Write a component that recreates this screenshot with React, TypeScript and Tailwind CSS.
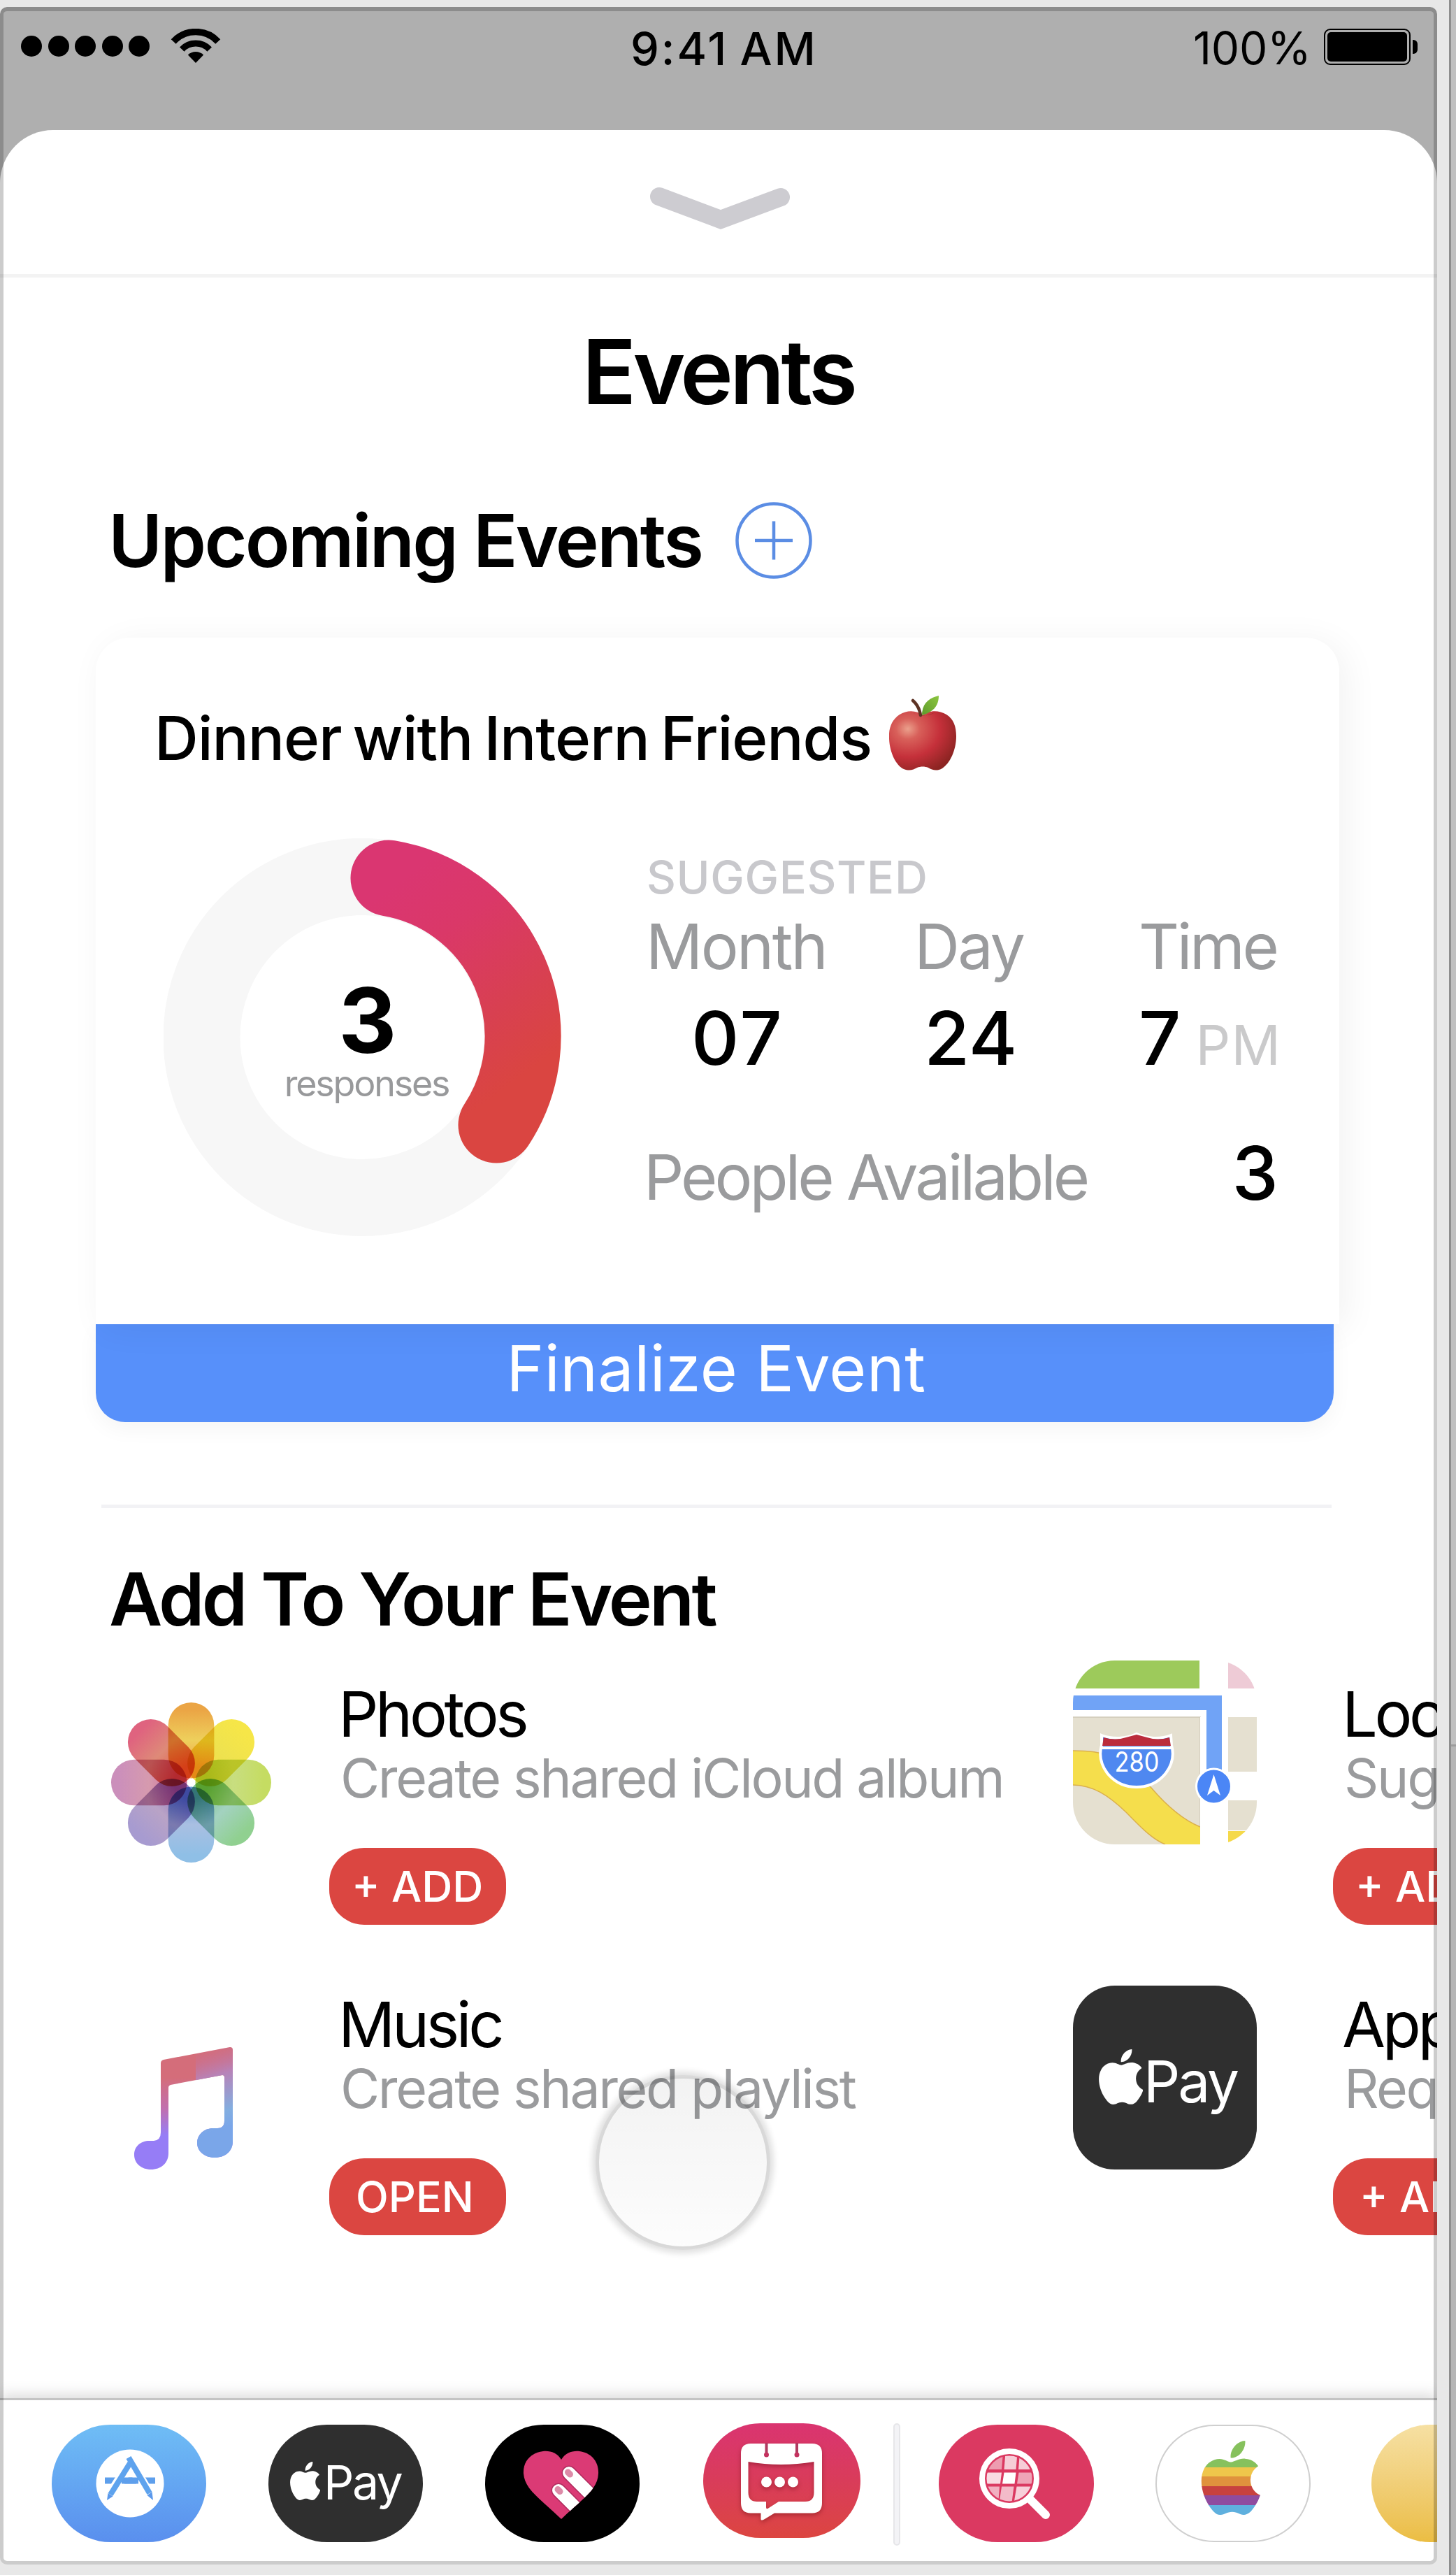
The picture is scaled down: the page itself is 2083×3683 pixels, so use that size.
import React from "react";

const APPLE =
  "M12.152 6.896c-.948 0-2.415-1.078-3.96-1.04-2.04.027-3.91 1.183-4.961 3.014-2.117 3.675-.546 9.103 1.519 12.09 1.013 1.454 2.208 3.09 3.792 3.039 1.52-.065 2.09-.987 3.935-.987 1.831 0 2.35.987 3.96.948 1.637-.026 2.676-1.48 3.676-2.948 1.156-1.688 1.636-3.325 1.662-3.415-.039-.013-3.182-1.221-3.22-4.857-.026-3.04 2.48-4.494 2.597-4.559-1.429-2.09-3.623-2.324-4.39-2.376-2-.156-3.675 1.09-4.61 1.09zM15.53 3.83c.843-1.012 1.4-2.427 1.245-3.83-1.207.052-2.662.805-3.532 1.818-.78.896-1.454 2.338-1.273 3.714 1.338.104 2.715-.688 3.559-1.701";

function AppleLogo({ className }: { className: string }) {
  return (
    <svg className={className} viewBox="2.2 0 19.4 24" preserveAspectRatio="none" fill="currentColor">
      <path d={APPLE} />
    </svg>
  );
}

function StatusBar() {
  return (
    <div className="flex h-[176px] shrink-0 items-start pl-[30px]">
      <div className="mt-[41px] flex gap-[8.5px]">
        {[0, 1, 2, 3, 4].map((i) => (
          <div key={i} className="size-[30px] rounded-full bg-black" />
        ))}
      </div>
      <svg className="mt-[31px] ml-[30px] h-[50px] w-[72px]" viewBox="0 0 72 50" fill="none" stroke="#000">
        <path d="M4.2 18.4A43.5 43.5 0 0 1 67.8 18.4" strokeWidth="9.5" />
        <path d="M16.3 29.6A27 27 0 0 1 55.7 29.6" strokeWidth="9" />
        <path d="M36 49L24.8 37.6A16 16 0 0 1 47.2 37.6Z" fill="#000" stroke="none" />
      </svg>
      <div className="mt-[27px] ml-[586px] w-[269px] text-[65px] leading-none font-[550] tracking-[2.9px] [word-spacing:-4px] whitespace-nowrap">
        9:41 AM
      </div>
      <div className="mt-[27px] ml-[536px] w-[169px] text-[64px] leading-none tracking-[-0.26px]">100%</div>
      <div className="mt-[31px] ml-[18px] h-[52px] w-[124px] rounded-[9px] border-2 border-black p-[3px]">
        <div className="h-full rounded-[5px] bg-black" />
      </div>
      <div className="mt-[47px] ml-[3px] h-[20px] w-[7px] rounded-r-[6px] bg-black" />
    </div>
  );
}

function RedApple() {
  return (
    <svg className="ml-[25px] h-[107px] w-[96px]" viewBox="0 0 96 107">
      <defs>
        <radialGradient id="skin" cx="0.28" cy="0.3" r="0.8">
          <stop offset="0" stopColor="#eba08c" />
          <stop offset="0.22" stopColor="#d8605a" />
          <stop offset="0.6" stopColor="#c5303a" />
          <stop offset="1" stopColor="#8c2422" />
        </radialGradient>
        <linearGradient id="leaf" x1="0" y1="1" x2="1" y2="0">
          <stop offset="0" stopColor="#5d9a2c" />
          <stop offset="1" stopColor="#8cc63f" />
        </linearGradient>
      </defs>
      <path
        d="M48 28C40 21 26 20 15 27C3 35-1 48 0 62C1 82 10 100 21 105C29 108 35 106 40 103C45 101 51 101 56 103C62 107 69 108 76 104C87 97 96 78 96 58C96 44 92 33 82 27C71 20 56 21 48 28Z"
        fill="url(#skin)"
      />
      <path d="M33 24Q48 33 66 24Q52 29 48 29Q42 29 33 24Z" fill="#7d2a1c" opacity="0.7" />
      <path d="M45 28Q43 15 34 7" fill="none" stroke="#5d3324" strokeWidth="4.5" strokeLinecap="round" />
      <path d="M47 28C47 10 58 3 71 0C71 13 65 23 47 28Z" fill="url(#leaf)" />
    </svg>
  );
}

function ResponseRing() {
  return (
    <div className="relative ml-[14px] size-[570px] shrink-0">
      <svg className="size-full" viewBox="0 0 570 570" fill="none">
        <defs>
          <linearGradient id="ring" x1="0.1" y1="0" x2="0.5" y2="1">
            <stop offset="0" stopColor="#da3671" />
            <stop offset="0.3" stopColor="#da3868" />
            <stop offset="0.7" stopColor="#d84051" />
            <stop offset="1" stopColor="#da4541" />
          </linearGradient>
        </defs>
        <circle cx="284" cy="284.500" r="229.500" stroke="#f7f7f7" strokeWidth="110" />
        <path d="M322 57A229.500 229.500 0 0 1 476 410" stroke="url(#ring)" strokeWidth="109" strokeLinecap="round" />
      </svg>
      <div className="absolute inset-0 flex flex-col items-center pt-[196px] pl-[14px]">
        <div className="text-[129px] leading-none font-bold">3</div>
        <div className="mr-[3px] text-[52px] leading-none tracking-[-2.2px] text-[#98999b]">responses</div>
      </div>
    </div>
  );
}

function EventCard() {
  return (
    <div className="mt-[84px] ml-[137px]">
      <div className="relative z-10 h-[982px] w-[1779px] rounded-t-[48px] bg-white pt-[83px] pl-[83px] shadow-[10px_6px_50px_rgba(0,0,0,0.055)]">
        <div className="flex items-start">
          <div className="mt-[17px] w-[1027px] pl-[1px] text-[87px] leading-none font-medium tracking-[-1.1px] [word-spacing:-6px] whitespace-nowrap">
            Dinner with Intern Friends
          </div>
          <RedApple />
        </div>
        <div className="mt-[97px] flex items-start">
          <ResponseRing />
          <div className="mt-[23px] ml-[117px] w-[908px] leading-none text-[#9a9b9d]">
            <div className="pl-[4px] text-[65px] font-medium tracking-[0.6px] text-[#c8c8cc]">SUGGESTED</div>
            <div className="mt-[22px] grid grid-cols-[387px_321px_198px] text-[90px] font-normal">
              <div className="pl-[3px] tracking-[-2.6px]">Month</div>
              <div className="tracking-[-2.8px]">Day</div>
              <div className="tracking-[-3.4px]">Time</div>
            </div>
            <div className="mt-[33px] grid grid-cols-[387px_321px_198px] text-[106px] font-medium text-black">
              <div className="pl-[68px] tracking-[3px]">07</div>
              <div className="pl-[14px]">24</div>
              <div className="flex items-baseline">
                7<span className="ml-[21px] text-[78px] font-normal tracking-[1px] text-[#cacacb]">PM</span>
              </div>
            </div>
            <div className="mt-[87px] flex items-baseline justify-between">
              <div className="text-[90px] font-normal tracking-[-4px]">People Available</div>
              <div className="text-[106px] font-medium text-black">3</div>
            </div>
          </div>
        </div>
      </div>
      <div className="flex h-[140px] w-[1771px] justify-center rounded-b-[42px] bg-[#5790fa] pt-[18px] pl-[4px] text-[91px] leading-none tracking-[0.5px] text-white shadow-[0_10px_30px_rgba(0,0,0,0.045)]">
        Finalize Event
      </div>
    </div>
  );
}

const PETALS: [number, string, string, string][] = [
  [0, "#eba545", "#eed05c", "#f3a04a"],
  [45, "#f6e648", "#eee24f", "#f0dc48"],
  [90, "#c5dc62", "#c8de80", "#b4d658"],
  [135, "#90d090", "#a3d2c0", "#7cc08c"],
  [180, "#8fbfe6", "#a9bfe2", "#6a9cd6"],
  [225, "#a79bd0", "#b9a3c6", "#9478c0"],
  [270, "#cb8fbb", "#d69aae", "#cc6a98"],
  [315, "#df637f", "#de8a78", "#e06450"],
];

function PhotosIcon() {
  return (
    <svg className="mt-[60px] ml-[16px] size-[229px] isolate" viewBox="0 0 230 230">
      <defs>
        {PETALS.map(([a, c, d, e]) => (
          <linearGradient key={a} id={`petal${a}`} x1="0" y1="0" x2="0" y2="1">
            <stop offset="0.1" stopColor={c} />
            <stop offset="0.5" stopColor={d} />
            <stop offset="0.85" stopColor={e} />
          </linearGradient>
        ))}
      </defs>
      {PETALS.map(([a]) => (
        <rect
          key={a}
          className="mix-blend-multiply"
          x="82"
          y="0"
          width="66"
          height="109"
          rx="33"
          fill={`url(#petal${a})`}
          transform={`rotate(${a} 115 115)`}
        />
      ))}
    </svg>
  );
}

const NOTE =
  "M38 23Q38 19 42 18L137 0Q141 0 141 4V135C141 149 130 158 115 158C101 158 90 149 90 137C90 125 100 116 113 116H119Q129 116 129 105V43Q129 40 126 40L52 54Q49 55 49 58V152C49 166 38 175 24 175C10 175 0 166 0 154C0 142 9 134 22 134H28Q38 133 38 122Z";

function MusicIcon() {
  return (
    <svg className="mt-[88px] ml-[49px] h-[175px] w-[141px]" viewBox="0 0 141 175">
      <defs>
        <linearGradient id="noteA" x1="0" y1="0" x2="0" y2="1">
          <stop offset="0.25" stopColor="#d46d7a" />
          <stop offset="0.5" stopColor="#c16fae" />
          <stop offset="0.72" stopColor="#967df6" />
        </linearGradient>
        <linearGradient id="noteB" gradientUnits="userSpaceOnUse" x1="95" y1="5" x2="130" y2="115">
          <stop offset="0" stopColor="#c4709a" stopOpacity="0" />
          <stop offset="0.35" stopColor="#b783b8" />
          <stop offset="0.8" stopColor="#83aee0" />
          <stop offset="1" stopColor="#7aa6e9" />
        </linearGradient>
        <clipPath id="noteR">
          <rect x="88" y="0" width="60" height="175" />
        </clipPath>
      </defs>
      <path d={NOTE} fill="url(#noteA)" />
      <path d={NOTE} fill="url(#noteB)" clipPath="url(#noteR)" />
    </svg>
  );
}

function MapsIcon() {
  return (
    <svg className="size-[263px]" viewBox="0 0 263 263">
      <defs>
        <clipPath id="mapClip">
          <rect width="263" height="263" rx="60" />
        </clipPath>
      </defs>
      <g clipPath="url(#mapClip)">
        <rect width="263" height="263" fill="#fff" />
        <rect width="181" height="40" fill="#9dca5b" />
        <rect x="222" width="41" height="40" fill="#eecbd6" />
        <rect y="81" width="182" height="182" fill="#e5e0d0" />
        <path d="M182 263V81H0" fill="none" stroke="#cfc9b8" strokeWidth="1.5" />
        <rect x="222" y="81" width="41" height="78" fill="#e5e0d0" />
        <rect x="222" y="200" width="41" height="43" fill="#e5e0d0" />
        <rect x="222" y="244" width="41" height="19" fill="#f5d94a" />
        <path
          d="M-2 129C25 129 38 131 55 137C80 147 95 166 112 182C130 203 155 227 182 238V263H132C112 255 95 236 76 217C50 192 28 178 -2 178Z"
          fill="#f5de4c"
        />
        <path
          d="M-2 129C25 129 38 131 55 137C80 147 95 166 112 182C130 203 155 227 182 238M132 263C112 255 95 236 76 217C50 192 28 178 -2 178"
          fill="none"
          stroke="#dbb04c"
          strokeWidth="1.5"
        />
        <path d="M0 50H213V165H191V71H0Z" fill="#70a3f6" />
        <rect x="182" y="81" width="9" height="182" fill="#fff" />
        <path
          d="M41 107C57 113 76 112 91 105C106 112 125 113 140 107L141 121Q147 142 133 161Q117 181 91 181Q65 181 49 161Q35 142 41 121Z"
          fill="#4f88f0"
          stroke="#fff"
          strokeWidth="4"
        />
        <path d="M44 110Q60 115 76 110L91 106L106 110Q122 115 138 110L140 122H42Z" fill="#bb2c3c" />
        <path d="M40 125H142" stroke="#fff" strokeWidth="4" />
        <text x="91.5" y="158.5" textAnchor="middle" fontSize="40" fill="#fff" fontFamily="Inter, sans-serif" textLength="64" lengthAdjust="spacingAndGlyphs">
          280
        </text>
        <circle cx="201.5" cy="180" r="25" fill="#4b86f6" stroke="#fff" strokeWidth="3" />
        <path d="M201.5 163L211 193L201.500 186L192 193Z" fill="#fff" />
      </g>
    </svg>
  );
}

function ApplePayIcon() {
  return (
    <div className="flex size-[263px] items-start rounded-[60px] bg-[#2f2f2f] pl-[37px] text-white">
      <AppleLogo className="mt-[91px] h-[79px] w-[63px] shrink-0" />
      <div className="mt-[97px] ml-[1px] text-[82px] leading-none tracking-[-3.1px]">Pay</div>
    </div>
  );
}

type ItemProps = {
  icon: React.ReactNode;
  slot: string;
  pad: string;
  title: string;
  sub: string;
  action: string;
  actionPad: string;
};

function AddItem({ icon, slot, pad, title, sub, action, actionPad }: ItemProps) {
  return (
    <div className="flex h-[465px] items-start">
      <div className={`${slot} shrink-0`}>{icon}</div>
      <div className={`${pad} leading-none whitespace-nowrap`}>
        <div className="pl-[13px] text-[90px] tracking-[-4.4px]">{title}</div>
        <div className="mt-[8px] pl-[16px] text-[77px] tracking-[-2.4px] text-[#9a9b9d]">{sub}</div>
        <div
          className={`${actionPad} mt-[61px] flex h-[110px] w-[253px] items-center rounded-[50px] bg-[#db4641] text-[61px] font-medium text-white`}
        >
          {action}
        </div>
      </div>
    </div>
  );
}

function AddSection() {
  return (
    <div className="mt-[36px] ml-[143px] flex w-[2600px]">
      <div className="w-[1392px] shrink-0">
        <AddItem icon={<PhotosIcon />} slot="w-[328px]" pad="pt-[32px]" title="Photos" sub="Create shared iCloud album" action="+ ADD" actionPad="pl-[32px]" />
        <AddItem icon={<MusicIcon />} slot="w-[328px]" pad="pt-[11px]" title="Music" sub="Create shared playlist" action="OPEN" actionPad="pl-[38px]" />
      </div>
      <div>
        <AddItem icon={<MapsIcon />} slot="w-[372px]" pad="pt-[32px]" title="Location" sub="Suggest a place" action="+ ADD" actionPad="pl-[32px]" />
        <AddItem icon={<ApplePayIcon />} slot="w-[372px]" pad="pt-[11px]" title="Apple Pay" sub="Request money" action="+ ADD" actionPad="pl-[38px]" />
      </div>
    </div>
  );
}

function AppStorePill() {
  return (
    <div className="h-[168px] w-[221px] rounded-full bg-linear-to-b from-[#6fbdf5] to-[#5a8fee]">
      <svg className="size-full" viewBox="0 0 221 168" fill="none" strokeLinecap="butt">
        <circle cx="112" cy="84" r="48.5" fill="#fff" />
        <path d="M76 80H148" stroke="#5e9fec" strokeWidth="9" />
        <path d="M115 52L86 98" stroke="#fff" strokeWidth="16" />
        <path d="M108 47L138 98" stroke="#fff" strokeWidth="16" />
        <path d="M100 80H124" stroke="#5e9fec" strokeWidth="9" />
        <path d="M112 55L84 100" stroke="#5ea3ee" strokeWidth="8" />
        <path d="M80.500 98L79 108L87.500 102.500Z" fill="#5b99ec" />
        <path d="M110 47L140 98" stroke="#5ea3ee" strokeWidth="8" />
        <path d="M143.500 96L145 108L136.500 101Z" fill="#5b99ec" />
      </svg>
    </div>
  );
}

function HeartPill() {
  const heart = "M109 50C103 40 93 37 83 38C66 40 54 52 55 70C57 92 75 103 109 135C143 103 161 92 162 70C163 52 151 40 135 38C125 37 115 40 109 50Z";
  return (
    <div className="h-[168px] w-[221px] rounded-full bg-black">
      <svg className="size-full" viewBox="0 0 221 168" fill="none">
        <clipPath id="heart">
          <path d={heart} />
        </clipPath>
        <path d={heart} fill="#db3a75" />
        <g clipPath="url(#heart)" strokeLinecap="round">
          <path d="M120 69L164 113M105 94L149 138" stroke="#b02c5e" strokeWidth="21" />
          <path d="M120 69L164 113M105 94L149 138" stroke="#fff" strokeWidth="18" />
          <path d="M118.500 68L121.500 71M104 92.500L107 95.500" stroke="#dd8ba8" strokeWidth="9" />
        </g>
      </svg>
    </div>
  );
}

function EventsPill() {
  return (
    <div className="-mt-[2px] h-[164px] w-[225px] rounded-full bg-linear-to-b from-[#da3470] via-[#d93c5a] to-[#dc4540]">
      <svg className="size-full drop-shadow-[0_3px_3px_rgba(80,0,0,0.35)]" viewBox="0 0 225 164">
        <path
          fillRule="evenodd"
          fill="#fff"
          d="M68 29H156Q170 29 170 43V114Q170 128.500 156 128.500H102L88 137Q82.500 140 82.500 137V128.500H68Q54 128.500 54 114V43Q54 29 68 29ZM64.500 55V99Q64.500 112 77 112H90V120Q90 124 94 121L108 112H146Q158.500 112 158.500 99V55Q111 63 64.500 55Z"
        />
        <path d="M90.500 28V45M134 28V45" stroke="#b03a5f" strokeWidth="4" />
        <circle cx="90.500" cy="45" r="3.500" fill="#c4325f" />
        <circle cx="134" cy="45" r="3.500" fill="#c4325f" />
        <circle cx="90.500" cy="84" r="7.500" fill="#fff" />
        <circle cx="109.500" cy="84" r="7.500" fill="#fff" />
        <circle cx="128.500" cy="84" r="7.500" fill="#fff" />
      </svg>
    </div>
  );
}

function SearchPill() {
  return (
    <div className="h-[168px] w-[222px] rounded-full bg-[#db3961]">
      <svg className="size-full" viewBox="0 0 222 168" fill="none">
        <clipPath id="globe">
          <circle cx="101" cy="77" r="32.500" />
        </clipPath>
        <g clipPath="url(#globe)" fill="#fff">
          <path d="M60 40H92L90 64H60Z" opacity="0.5" />
          <path d="M95.500 40H112.500L110.500 64H93.500Z" opacity="0.75" />
          <path d="M116 40H140V64H114Z" opacity="0.75" />
          <path d="M60 68.500H90L88 84.500H60Z" opacity="0.82" />
          <path d="M93.500 68.500H110.500L108.500 84.500H91Z" />
          <path d="M114.500 68.500H140V84.500H112Z" opacity="0.55" />
          <path d="M60 88.500H87L85 115H60Z" opacity="0.6" />
          <path d="M90 88.500H107.500L104 115H86Z" opacity="0.66" />
          <path d="M111.500 88.500H140V115H107Z" opacity="0.76" />
        </g>
        <circle cx="101" cy="77" r="39" stroke="#fff" strokeWidth="8" />
        <path d="M130 106L153 129" stroke="#fff" strokeWidth="12" strokeLinecap="round" />
      </svg>
    </div>
  );
}

const STRIPES: [number, number, string][] = [
  [20, 41, "#86c15d"],
  [61, 13, "#efc64b"],
  [74, 14, "#e0923d"],
  [88, 13, "#c8413f"],
  [101, 14, "#8f4b9f"],
  [115, 16, "#5fb0de"],
];

function RainbowPill() {
  return (
    <div className="h-[168px] w-[222px] rounded-full border-2 border-[#cfcfcf] bg-white">
      <svg className="h-[164px] w-[218px]" viewBox="2 2 218 164">
        <clipPath id="rainbow">
          <path d={APPLE} transform="translate(56.200 23) scale(4.300 4.420)" />
        </clipPath>
        <g clipPath="url(#rainbow)">
          {STRIPES.map(([y, h, c]) => (
            <rect key={y} x="50" y={y} width="120" height={h + 0.5} fill={c} />
          ))}
        </g>
      </svg>
    </div>
  );
}

function AppDrawer() {
  return (
    <div className="relative z-20 flex h-[238px] shrink-0 items-start border-t-3 border-[#c4c4c4] bg-white pt-[35px] pl-[74px] shadow-[0_-4px_20px_rgba(0,0,0,0.16)] *:shrink-0">
      <AppStorePill />
      <div className="ml-[89px] flex h-[168px] w-[221px] items-start rounded-full bg-[#2f2f2f] pl-[31px] text-white">
        <AppleLogo className="mt-[53px] h-[55px] w-[43px] shrink-0" />
        <div className="mt-[48px] ml-[5px] text-[68px] leading-none tracking-[-2.5px]">Pay</div>
      </div>
      <div className="ml-[89px]">
        <HeartPill />
      </div>
      <div className="ml-[91px]">
        <EventsPill />
      </div>
      <div className="-mt-[2px] ml-[47px] h-[175px] w-[10px] rounded-full border-2 border-[#e6e6e9] bg-[#f3f3f6]" />
      <div className="ml-[55px]">
        <SearchPill />
      </div>
      <div className="ml-[88px]">
        <RainbowPill />
      </div>
      <div className="ml-[87px] h-[168px] w-[222px] rounded-full bg-linear-to-b from-[#f6e0a3] to-[#ebbd42]" />
    </div>
  );
}

export default function App() {
  return (
    <div className="flex h-[3683px] w-[2083px] overflow-hidden bg-[#e8e8e8] font-['Inter',sans-serif] text-black">
      <div className="relative mt-[10px] flex h-[3658px] w-[2056px] shrink-0 flex-col overflow-hidden rounded-[10px] bg-[#afafaf]">
        <StatusBar />
        <div className="flex min-h-0 flex-1 flex-col overflow-hidden rounded-t-[76px] bg-white">
          <div className="flex h-[211px] shrink-0 justify-center border-b-5 border-[#f3f3f3] pl-[4px]">
            <svg className="mt-[76px] h-[72px] w-[206px]" viewBox="0 0 206 72" fill="none">
              <path d="M16 19L104 52L190 20" stroke="#cdccd1" strokeWidth="26" strokeLinecap="round" />
            </svg>
          </div>
          <h1 className="mt-[71px] pr-[1px] text-center text-[128px] leading-none font-semibold tracking-[-4.9px]">Events</h1>
          <div className="mt-[122px] flex h-[110px] items-start pl-[155px]">
            <h2 className="mt-[2px] w-[849px] text-[105px] leading-none font-semibold tracking-[-2.7px] whitespace-nowrap">
              Upcoming Events
            </h2>
            <svg className="ml-[48px] size-[110px]" viewBox="0 0 110 110" fill="none" stroke="#5b8de4">
              <circle cx="55" cy="55" r="52.500" strokeWidth="4.500" />
              <path d="M28 55H82M55 27.500V82.500" strokeWidth="4.500" />
            </svg>
          </div>
          <EventCard />
          <div className="mt-[118px] ml-[145px] h-[5px] w-[1760px] shrink-0 bg-[#f2f2f5]" />
          <h2 className="mt-[77px] pl-[156px] text-[105px] leading-none font-semibold tracking-[-3.8px] whitespace-nowrap">
            Add To Your Event
          </h2>
          <AddSection />
        </div>
        <AppDrawer />
        <div className="absolute top-[2963px] left-[857px] z-30 size-[240px] rounded-full bg-linear-to-b from-black/5 to-black/1 shadow-[0_0_0_5px_rgba(0,0,0,0.04),0_0_8px_10px_rgba(0,0,0,0.12)]" />
        <div className="pointer-events-none absolute inset-0 z-40 rounded-[10px] border-[5px] border-t-[6px] border-black/20" />
      </div>
      <div className="ml-[17px] h-full w-[3px] bg-[#8e8e8e]" />
      <div className="flex h-full flex-1 flex-col">
        <div className="h-[2495px] shrink-0 bg-[#c0c0c0]" />
        <div className="flex-1 border-t-3 border-[#9c9c9c] bg-[#b5b5b5]" />
      </div>
    </div>
  );
}
